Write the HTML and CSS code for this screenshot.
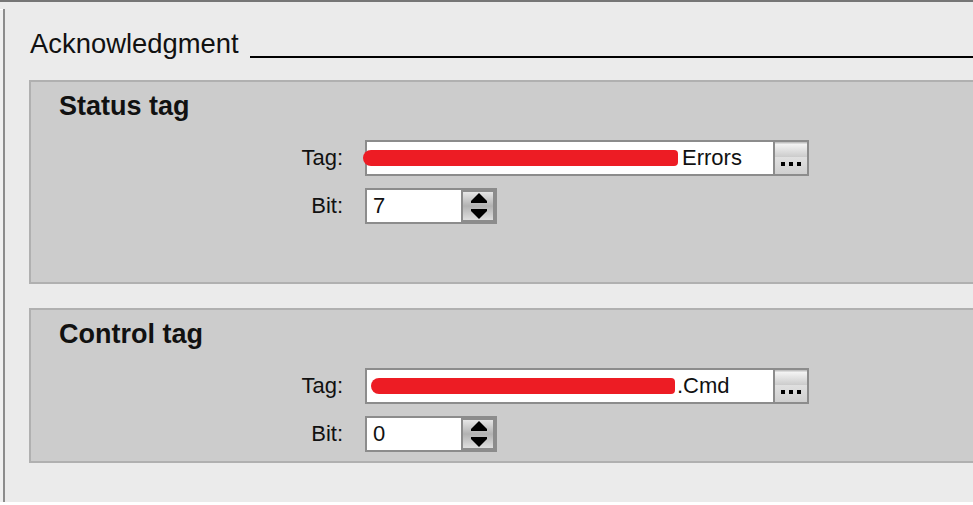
FILE: index.html
```html
<!DOCTYPE html>
<html lang="en">
<head>
<meta charset="utf-8">
<title>Acknowledgment</title>
<link rel="stylesheet" href="styles.css">
</head>
<body>
<div class="topbar"></div>
<div class="frame">
  <div class="edge"></div>
  <div class="main">
    <div class="group-title">
      <span class="group-label">Acknowledgment</span>
      <span class="group-rule"></span>
    </div>

    <section class="panel panel-status">
      <h2 class="panel-title">Status tag</h2>
      <div class="form">
        <span class="lbl">Tag:</span>
        <div class="tagfield">
          <div class="tagtext"><span class="redact redact-1"></span><span class="tail tail-1">Errors</span></div>
          <div class="browse"><i></i><i></i><i></i></div>
        </div>
        <span class="lbl">Bit:</span>
        <div class="spinfield">
          <div class="spintext">7</div>
          <div class="spinner">
            <svg width="30" height="28" viewBox="0 0 30 28"><polygon points="16,1 24,9 8,9" fill="#000"/><rect x="8" y="9" width="16" height="2" fill="#000"/><rect x="8" y="17" width="16" height="2" fill="#000"/><polygon points="8,19 24,19 16,27" fill="#000"/></svg>
          </div>
        </div>
      </div>
    </section>

    <section class="panel panel-control">
      <h2 class="panel-title">Control tag</h2>
      <div class="form">
        <span class="lbl">Tag:</span>
        <div class="tagfield">
          <div class="tagtext"><span class="redact redact-2"></span><span class="tail tail-2">.Cmd</span></div>
          <div class="browse"><i></i><i></i><i></i></div>
        </div>
        <span class="lbl">Bit:</span>
        <div class="spinfield">
          <div class="spintext">0</div>
          <div class="spinner">
            <svg width="30" height="28" viewBox="0 0 30 28"><polygon points="16,1 24,9 8,9" fill="#000"/><rect x="8" y="9" width="16" height="2" fill="#000"/><rect x="8" y="17" width="16" height="2" fill="#000"/><polygon points="8,19 24,19 16,27" fill="#000"/></svg>
          </div>
        </div>
      </div>
    </section>
  </div>
</div>
</body>
</html>
```
FILE: styles.css
```css
html, body {
  margin: 0;
  height: 505px;
  overflow: hidden;
  background: #ffffff;
  font-family: "Liberation Sans", Arial, sans-serif;
  color: #000;
}

.topbar {
  height: 2px;
  background: #767676;
}

.frame {
  display: flex;
  height: 500px;
  background: #ebebeb;
}

.edge {
  width: 3px;
  margin-top: 7px;
  background: #f0f0f0;
  border-top: 1px solid #ffffff;
}

.main {
  flex: 1;
  margin-top: 7px;
  border-left: 2px solid #8c8c8c;
  overflow: hidden;
}

.group-title {
  display: flex;
  height: 32px;
  margin: 19px 0 0 25px;
}

.group-label {
  font-size: 27.4px;
  line-height: 32px;
  white-space: nowrap;
  color: #111;
}

.group-rule {
  flex: 1;
  height: 2px;
  background: #000;
  align-self: flex-end;
  margin: 0 0 2px 11px;
}

.panel {
  margin: 20px -20px 0 24px;
  background: #cccccc;
  border: 2px solid #b0b0b0;
}

.panel-control {
  margin-top: 24px;
}

.panel-title {
  margin: 0;
  padding: 8px 0 0 28px;
  font-size: 27px;
  line-height: 32px;
  font-weight: bold;
  color: #111;
}

.form {
  display: grid;
  grid-template-columns: 312px max-content;
  column-gap: 22px;
  row-gap: 12px;
  align-items: center;
  margin-top: 18px;
}

.panel-status .form {
  padding-bottom: 58px;
}

.panel-control .form {
  padding-bottom: 9px;
}

.lbl {
  justify-self: end;
  font-size: 22px;
  color: #111;
}

.tagfield {
  display: flex;
  gap: 2px;
  width: 440px;
  height: 32px;
  border: 2px solid #8c8c8c;
  background: #8c8c8c;
}

.tagtext {
  width: 406px;
  background: #ffffff;
  display: flex;
  align-items: center;
  font-size: 22px;
  white-space: nowrap;
  color: #111;
}

.redact {
  flex: none;
  height: 16px;
  background: #ed1c24;
  border-radius: 8px 4px 4px 8px;
}

.redact-1 {
  width: 315px;
  margin-left: -4px;
}

.redact-2 {
  width: 304px;
  margin-left: 4px;
}

.tail-1 {
  margin-left: 4px;
}

.tail-2 {
  margin-left: 2px;
}

.browse {
  width: 32px;
  box-sizing: border-box;
  padding-bottom: 8px;
  display: flex;
  justify-content: center;
  align-items: flex-end;
  gap: 4px;
  background: linear-gradient(#c2c2c2 0, #c2c2c2 1px, #f4f4f4 2px, #cbcbcb 15px, #e0e0e0 15px, #cfcfcf 100%);
}

.browse i {
  width: 4px;
  height: 4px;
  background: #000;
}

.spinfield {
  display: flex;
  width: 128px;
  height: 32px;
  border: 2px solid #8c8c8c;
  background: #8c8c8c;
}

.spintext {
  width: 94px;
  box-sizing: border-box;
  padding-left: 6px;
  background: #ffffff;
  display: flex;
  align-items: center;
  font-size: 22px;
  color: #111;
}

.spinner {
  display: flex;
  width: 30px;
  margin: 2px;
  background: linear-gradient(#e6e6e6, #b2b2b2 50%, #dedede);
}
```
